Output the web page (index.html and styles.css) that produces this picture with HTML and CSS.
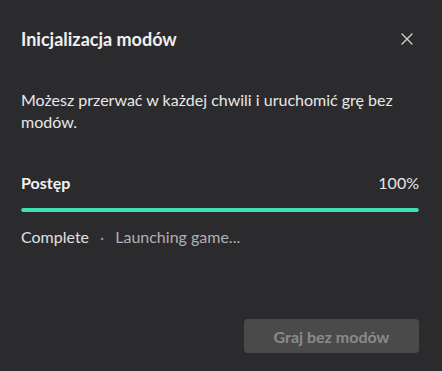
FILE: index.html
```html
<!DOCTYPE html>
<html lang="pl">
<head>
<meta charset="utf-8">
<link rel="stylesheet" href="styles.css">
</head>
<body>
<div class="dialog">
  <div class="header">
    <h1 class="title">Inicjalizacja modów</h1>
    <button class="close" aria-label="Zamknij">
      <svg width="12" height="12" viewBox="0 0 12 12"><path d="M1 1L11 11M11 1L1 11" stroke="#d0d0d0" stroke-width="1.4" stroke-linecap="round"/></svg>
    </button>
  </div>
  <p class="desc">Możesz przerwać w każdej chwili i uruchomić grę bez modów.</p>
  <div class="progress">
    <div class="progress-head">
      <span class="label">Postęp</span>
      <span class="pct">100%</span>
    </div>
    <div class="bar"><div class="fill" style="width:100%"></div></div>
    <div class="status">
      <span class="state">Complete</span>
      <span class="dot">·</span>
      <span class="step">Launching game...</span>
    </div>
  </div>
  <div class="footer">
    <button class="btn" disabled>Graj bez modów</button>
  </div>
</div>
</body>
</html>
```
FILE: styles.css
```css
html, body {
  margin: 0;
  padding: 0;
  background: #2b2b2d;
  height: 100%;
}
body {
  font-family: Lato, "Open Sans", sans-serif;
  color: #e6e6e6;
}
.dialog {
  box-sizing: border-box;
  width: 442px;
  height: 371px;
  padding: 28px 23px 0 21px;
  display: flex;
  flex-direction: column;
}
.header {
  display: flex;
  align-items: center;
  justify-content: space-between;
  height: 22px;
}
.title {
  margin: 0;
  font-size: 18px;
  line-height: 22px;
  font-weight: 700;
  color: #f0f0f0;
}
.close {
  background: none;
  border: 0;
  padding: 0;
  margin-right: 6px;
  display: flex;
  cursor: pointer;
}
.desc {
  margin: 39px 0 0 0;
  font-size: 16px;
  line-height: 22px;
  color: #e8e8e8;
}
.progress {
  margin-top: 40px;
}
.progress-head {
  display: flex;
  justify-content: space-between;
  font-size: 16px;
  line-height: 20px;
}
.label {
  font-weight: 700;
  color: #f2f2f2;
}
.pct {
  color: #e6e6e6;
}
.bar {
  margin-top: 15px;
  height: 4px;
  border-radius: 2px;
  background: #3a3a3c;
  overflow: hidden;
}
.fill {
  height: 100%;
  background: #3fe0b2;
  border-radius: 2px;
}
.status {
  margin-top: 15px;
  display: flex;
  align-items: center;
  gap: 11px;
  font-size: 16px;
  line-height: 20px;
}
.state { color: #e0e0e0; }
.dot { color: #9a9a9a; }
.step { color: #b0b0b4; }
.footer {
  margin-top: auto;
  margin-bottom: 18px;
  display: flex;
  justify-content: flex-end;
}
.btn {
  width: 175px;
  height: 34px;
  border: 0;
  border-radius: 4px;
  background: #4a4a4b;
  color: #8a8a8c;
  font-family: Lato, sans-serif;
  font-size: 16px;
  font-weight: 700;
}
```
